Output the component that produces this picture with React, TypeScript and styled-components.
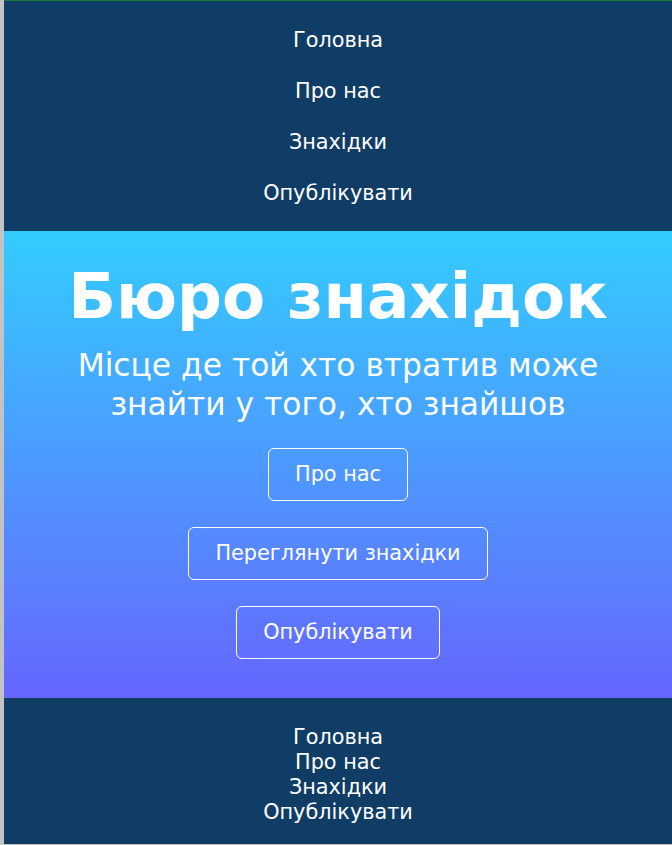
import React from 'react';
import styled, { createGlobalStyle } from 'styled-components';

const navLinks = ['Головна', 'Про нас', 'Знахідки', 'Опублікувати'];

const GlobalStyle = createGlobalStyle`
  html, body {
    margin: 0;
    padding: 0;
  }
  body {
    background-color: #c3c3c3;
    font-family: 'DejaVu Sans', 'Noto Sans', sans-serif;
    color: #fff;
  }
`;

const App: React.FC = () => {
  return (
    <>
      <GlobalStyle />
      <Page>
        <Header>
          <NavList>
            {navLinks.map((link) => (
              <NavItem key={link}>
                <NavLink href="#">{link}</NavLink>
              </NavItem>
            ))}
          </NavList>
        </Header>
        <Hero>
          <Title>Бюро знахідок</Title>
          <Subtitle>Місце де той хто втратив може знайти у того, хто знайшов</Subtitle>
          <Actions>
            <HeroButton href="#">Про нас</HeroButton>
            <HeroButton href="#">Переглянути знахідки</HeroButton>
            <HeroButton href="#">Опублікувати</HeroButton>
          </Actions>
        </Hero>
        <Footer>
          {navLinks.map((link) => (
            <FooterLink key={link} href="#">
              {link}
            </FooterLink>
          ))}
        </Footer>
      </Page>
    </>
  );
};

export default App;

const Page = styled.div`
  margin-left: 4px;
  border-top: 1px solid #16793a;
`;

const Header = styled.header`
  background-color: #103d66;
  padding: 14px 0 12px;
`;

const NavList = styled.ul`
  list-style: none;
  margin: 0;
  padding: 0;
  display: flex;
  flex-direction: column;
  align-items: center;
`;

const NavItem = styled.li`
  padding: 13px 0;
`;

const NavLink = styled.a`
  color: #fff;
  text-decoration: none;
  font-size: 20.8px;
  line-height: 25px;
`;

const Hero = styled.section`
  background: linear-gradient(180deg, #33ccff 0%, #6666ff 100%);
  padding: 29px 40px 39px;
  display: flex;
  flex-direction: column;
  align-items: center;
  text-align: center;
`;

const Title = styled.h1`
  margin: 0;
  font-size: 62.8px;
  line-height: 74px;
  font-weight: bold;
`;

const Subtitle = styled.p`
  margin: 12px 0 0;
  font-size: 31.3px;
  line-height: 39px;
  max-width: 560px;
`;

const Actions = styled.div`
  margin-top: 24px;
  display: flex;
  flex-direction: column;
  align-items: center;
  gap: 26px;
`;

const HeroButton = styled.a`
  display: inline-block;
  padding: 13px 26px;
  border: 1px solid #fff;
  border-radius: 6px;
  color: #fff;
  text-decoration: none;
  font-size: 20.8px;
  line-height: 25px;
`;

const Footer = styled.footer`
  background-color: #103d66;
  padding: 27px 0 19px;
  display: flex;
  flex-direction: column;
  align-items: center;
`;

const FooterLink = styled.a`
  color: #fff;
  text-decoration: none;
  font-size: 20.8px;
  line-height: 25px;
`;
